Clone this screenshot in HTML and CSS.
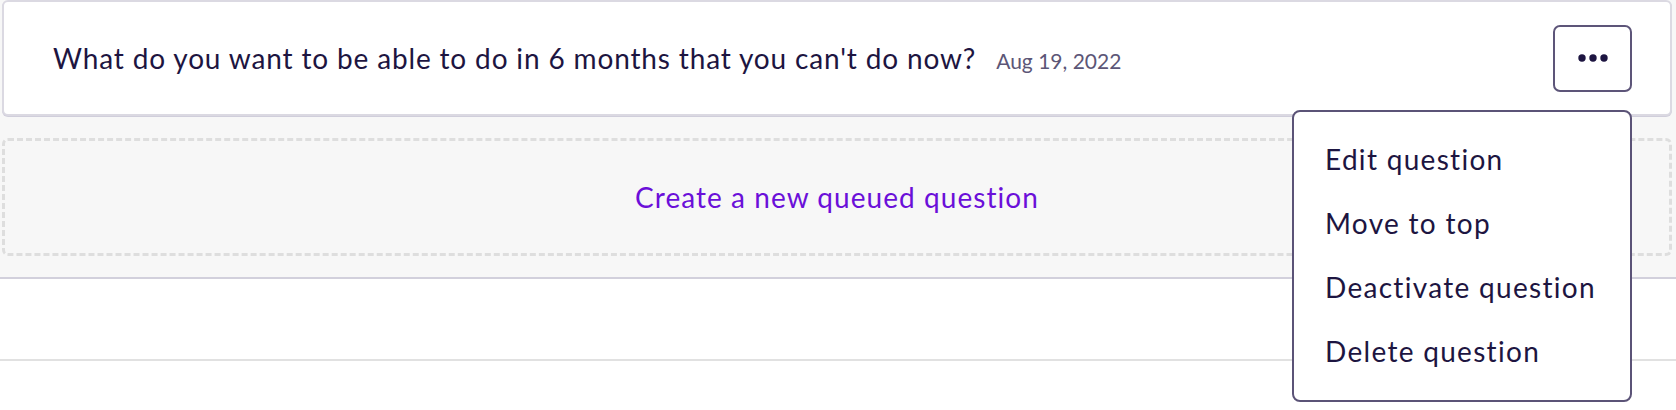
FILE: index.html
```html
<!DOCTYPE html>
<html lang="en">
<head>
<meta charset="utf-8">
<title>Queued questions</title>
<link rel="stylesheet" href="styles.css">
</head>
<body>
  <section class="panel">
    <div class="card">
      <div class="question">
        <span class="question-text">What do you want to be able to do in 6 months that you can't do now?</span>
        <span class="question-date">Aug 19, 2022</span>
      </div>
      <div class="actions">
        <button class="more-btn" type="button" aria-label="More actions">
          <svg width="30" height="8" viewBox="0 0 30 8" aria-hidden="true">
            <circle cx="4" cy="4" r="3.7" fill="#1d1541"/>
            <circle cx="15" cy="4" r="3.7" fill="#1d1541"/>
            <circle cx="26" cy="4" r="3.7" fill="#1d1541"/>
          </svg>
        </button>
        <ul class="menu">
          <li class="menu-item">Edit question</li>
          <li class="menu-item">Move to top</li>
          <li class="menu-item">Deactivate question</li>
          <li class="menu-item">Delete question</li>
        </ul>
      </div>
    </div>
    <div class="create-box">
      <span class="create-link">Create a new queued question</span>
    </div>
  </section>
  <div class="divider"></div>
</body>
</html>
```

FILE: styles.css
```css
* { box-sizing: border-box; }

html, body {
  margin: 0;
  padding: 0;
  background: #ffffff;
}

body {
  min-height: 100vh;
  font-family: Lato, "Noto Sans", sans-serif;
  color: #1d1541;
}

.panel {
  background: #f7f7f7;
  border-bottom: 2px solid #d2d0dc;
  padding: 0 4px 21px 2px;
  height: 279px;
}

.card {
  display: flex;
  align-items: center;
  justify-content: space-between;
  height: 116px;
  background: #ffffff;
  border: 2px solid #dbd9e2;
  border-radius: 6px;
  box-shadow: 0 1px 0 #d0cedb;
  padding: 0 38px 0 49px;
}

.question {
  display: flex;
  align-items: baseline;
  gap: 20px;
}

.question-text {
  font-size: 28px;
  letter-spacing: 0.85px;
  color: #1d1541;
}

.question-date {
  font-size: 21px;
  color: #5c5677;
}

.actions {
  position: relative;
}

.more-btn {
  display: flex;
  align-items: center;
  justify-content: center;
  width: 79px;
  height: 67px;
  padding: 0;
  background: #ffffff;
  border: 2px solid #5d5579;
  border-radius: 7px;
  cursor: pointer;
}

.menu {
  position: absolute;
  top: calc(100% + 18px);
  right: 0;
  z-index: 10;
  width: 340px;
  height: 292px;
  margin: 0;
  padding: 15px 0 0 31px;
  list-style: none;
  background: #ffffff;
  border: 2px solid #5b5377;
  border-radius: 8px;
}

.menu-item {
  font-size: 28px;
  line-height: 64px;
  letter-spacing: 1.3px;
  color: #1d1541;
  white-space: nowrap;
}

.create-box {
  display: flex;
  align-items: center;
  justify-content: center;
  height: 118px;
  margin-top: 22px;
  border: 3px dashed #dedede;
  border-radius: 6px;
}

.create-link {
  font-size: 28px;
  letter-spacing: 1.05px;
  color: #6b0fd9;
}

.divider {
  height: 2px;
  margin-top: 80px;
  background: #e1e1e1;
}
```
